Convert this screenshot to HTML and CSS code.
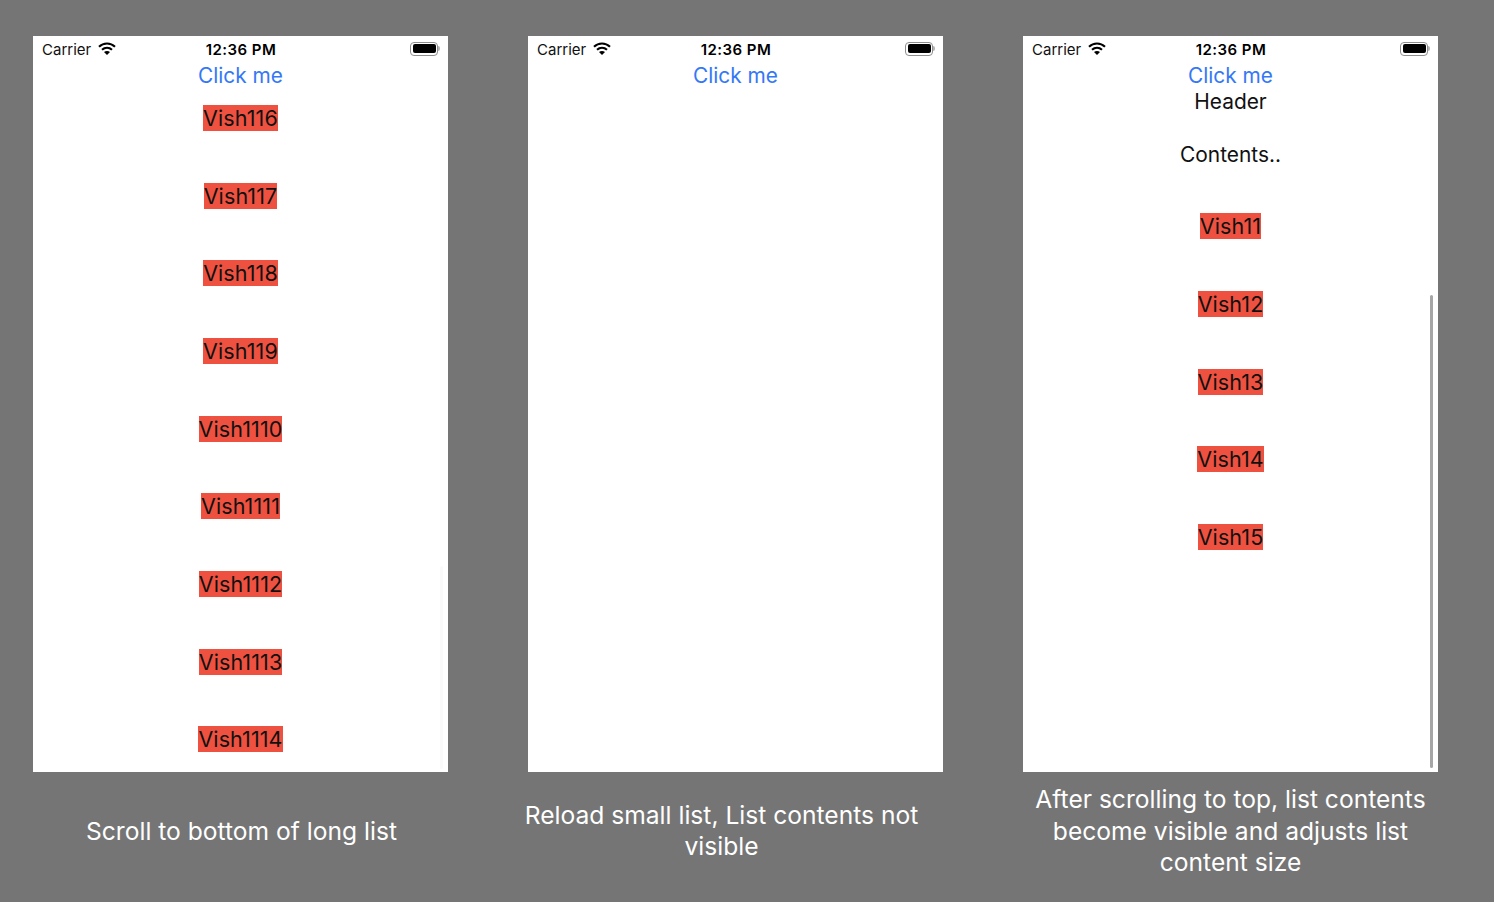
FILE: index.html
```html
<!DOCTYPE html>
<html lang="en">
<head>
<meta charset="utf-8">
<title>List reload demo</title>
<link rel="stylesheet" href="styles.css">
</head>
<body>
<main class="board">
  <section class="col">
    <div class="phone">
      <div class="status">
        <div class="status-left"><span class="carrier">Carrier</span>
          <svg class="wifi" viewBox="0 0 18 13"><path class="wifi-arc" d="M1 4.700C5.500.400 12.500.400 17 4.700"/><path class="wifi-arc" d="M4 7.800C6.900 5.200 11.100 5.200 14 7.800"/><path d="M6 10.100C7.800 8.500 10.200 8.500 12 10.100L9 13z"/></svg>
        </div>
        <span class="time">12:36 PM</span>
        <div class="battery"><span class="battery-fill"></span><span class="battery-nub"></span></div>
      </div>
      <div class="action">Click me</div>
      <div class="list list-long">
        <div class="row"><span class="tag">Vish116</span></div>
        <div class="row"><span class="tag">Vish117</span></div>
        <div class="row"><span class="tag">Vish118</span></div>
        <div class="row"><span class="tag">Vish119</span></div>
        <div class="row"><span class="tag">Vish1110</span></div>
        <div class="row"><span class="tag">Vish1111</span></div>
        <div class="row"><span class="tag">Vish1112</span></div>
        <div class="row"><span class="tag">Vish1113</span></div>
        <div class="row"><span class="tag">Vish1114</span></div>
      </div>
      <div class="scrollbar scrollbar-faint"></div>
    </div>
    <p class="caption caption-one">Scroll to bottom of long list</p>
  </section>

  <section class="col">
    <div class="phone">
      <div class="status">
        <div class="status-left"><span class="carrier">Carrier</span>
          <svg class="wifi" viewBox="0 0 18 13"><path class="wifi-arc" d="M1 4.700C5.500.400 12.500.400 17 4.700"/><path class="wifi-arc" d="M4 7.800C6.900 5.200 11.100 5.200 14 7.800"/><path d="M6 10.100C7.800 8.500 10.200 8.500 12 10.100L9 13z"/></svg>
        </div>
        <span class="time">12:36 PM</span>
        <div class="battery"><span class="battery-fill"></span><span class="battery-nub"></span></div>
      </div>
      <div class="action">Click me</div>
    </div>
    <p class="caption caption-two">Reload small list, List contents not visible</p>
  </section>

  <section class="col">
    <div class="phone">
      <div class="status">
        <div class="status-left"><span class="carrier">Carrier</span>
          <svg class="wifi" viewBox="0 0 18 13"><path class="wifi-arc" d="M1 4.700C5.500.400 12.500.400 17 4.700"/><path class="wifi-arc" d="M4 7.800C6.900 5.200 11.100 5.200 14 7.800"/><path d="M6 10.100C7.800 8.500 10.200 8.500 12 10.100L9 13z"/></svg>
        </div>
        <span class="time">12:36 PM</span>
        <div class="battery"><span class="battery-fill"></span><span class="battery-nub"></span></div>
      </div>
      <div class="action">Click me</div>
      <div class="list list-short">
        <div class="plain">Header</div>
        <div class="plain plain-contents">Contents..</div>
        <div class="row row-first"><span class="tag">Vish11</span></div>
        <div class="row"><span class="tag">Vish12</span></div>
        <div class="row"><span class="tag">Vish13</span></div>
        <div class="row"><span class="tag">Vish14</span></div>
        <div class="row"><span class="tag">Vish15</span></div>
      </div>
      <div class="scrollbar scrollbar-dark"></div>
    </div>
    <p class="caption caption-three">After scrolling to top, list contents become visible and adjusts list content size</p>
  </section>
</main>
</body>
</html>
```
FILE: styles.css
```css
* { box-sizing: border-box; }
html, body { margin: 0; height: 100%; }
body {
  background: #757575;
  font-family: Inter, "Liberation Sans", Arial, sans-serif;
  overflow: hidden;
}
.board {
  display: flex;
  gap: 80px;
  padding: 36px 0 0 33px;
}
.col { width: 415px; flex: none; }
.phone {
  position: relative;
  height: 736px;
  background: #fff;
  overflow: hidden;
  display: flex;
  flex-direction: column;
}
.status {
  height: 26px;
  flex: none;
  display: grid;
  grid-template-columns: 1fr auto 1fr;
  align-items: center;
  padding: 0 8px 0 9px;
  color: #000;
}
.status-left { display: flex; align-items: center; gap: 7px; }
.carrier { font-size: 15px; color: #111; }
.wifi { width: 18px; height: 13px; fill: #000; margin-top: -1px; }
.wifi-arc { fill: none; stroke: #000; stroke-width: 2.100px; }
.time { font-size: 15px; font-weight: 600; letter-spacing: .45px; }
.battery {
  justify-self: end;
  position: relative;
  width: 28px;
  height: 14px;
  border: 1px solid #8e8e8e;
  border-radius: 4px;
  padding: 1.500px;
  margin-top: -1px;
  margin-right: 2px;
}
.battery-fill { display: block; height: 100%; background: #000; border-radius: 2px; }
.battery-nub {
  position: absolute;
  right: -3px;
  top: 3.500px;
  width: 2px;
  height: 5px;
  background: #b5b5b5;
  border-radius: 0 2px 2px 0;
}
.action {
  height: 26px;
  flex: none;
  padding-top: 1px;
  text-align: center;
  line-height: 26px;
  font-size: 20.800px;
  color: #3478f6;
}
.list {
  display: flex;
  flex-direction: column;
  align-items: center;
  gap: 51.650px;
  font-size: 21.500px;
  letter-spacing: .1px;
  color: #111;
}
.list-long { padding-top: 17.200px; }
.row { height: 26px; line-height: 26px; flex: none; }
.row-first { margin-top: -5.500px; }
.tag { display: block; background: #ef5140; height: 26px; }
.plain { height: 26px; padding-top: 1px; line-height: 26px; flex: none; color: #111; font-size: 20.900px; letter-spacing: 0; }
.plain-contents { margin-top: -24.500px; }
.scrollbar { position: absolute; width: 3px; right: 5px; border-radius: 2px; }
.scrollbar-faint { top: 530px; bottom: 3px; background: #fafafa; }
.scrollbar-dark { top: 259px; bottom: 4px; background: #a6a6a6; }
.caption {
  margin: 0;
  width: 415px;
  height: 130px;
  display: flex;
  align-items: center;
  justify-content: center;
  text-align: center;
  color: #fff;
  font-size: 24.600px;
  line-height: 31.500px;
  padding-bottom: 11px;
}
.caption-one { margin-left: 1px; }
.caption-two { margin-left: -14px; line-height: 31px; padding-bottom: 13px; }
```
